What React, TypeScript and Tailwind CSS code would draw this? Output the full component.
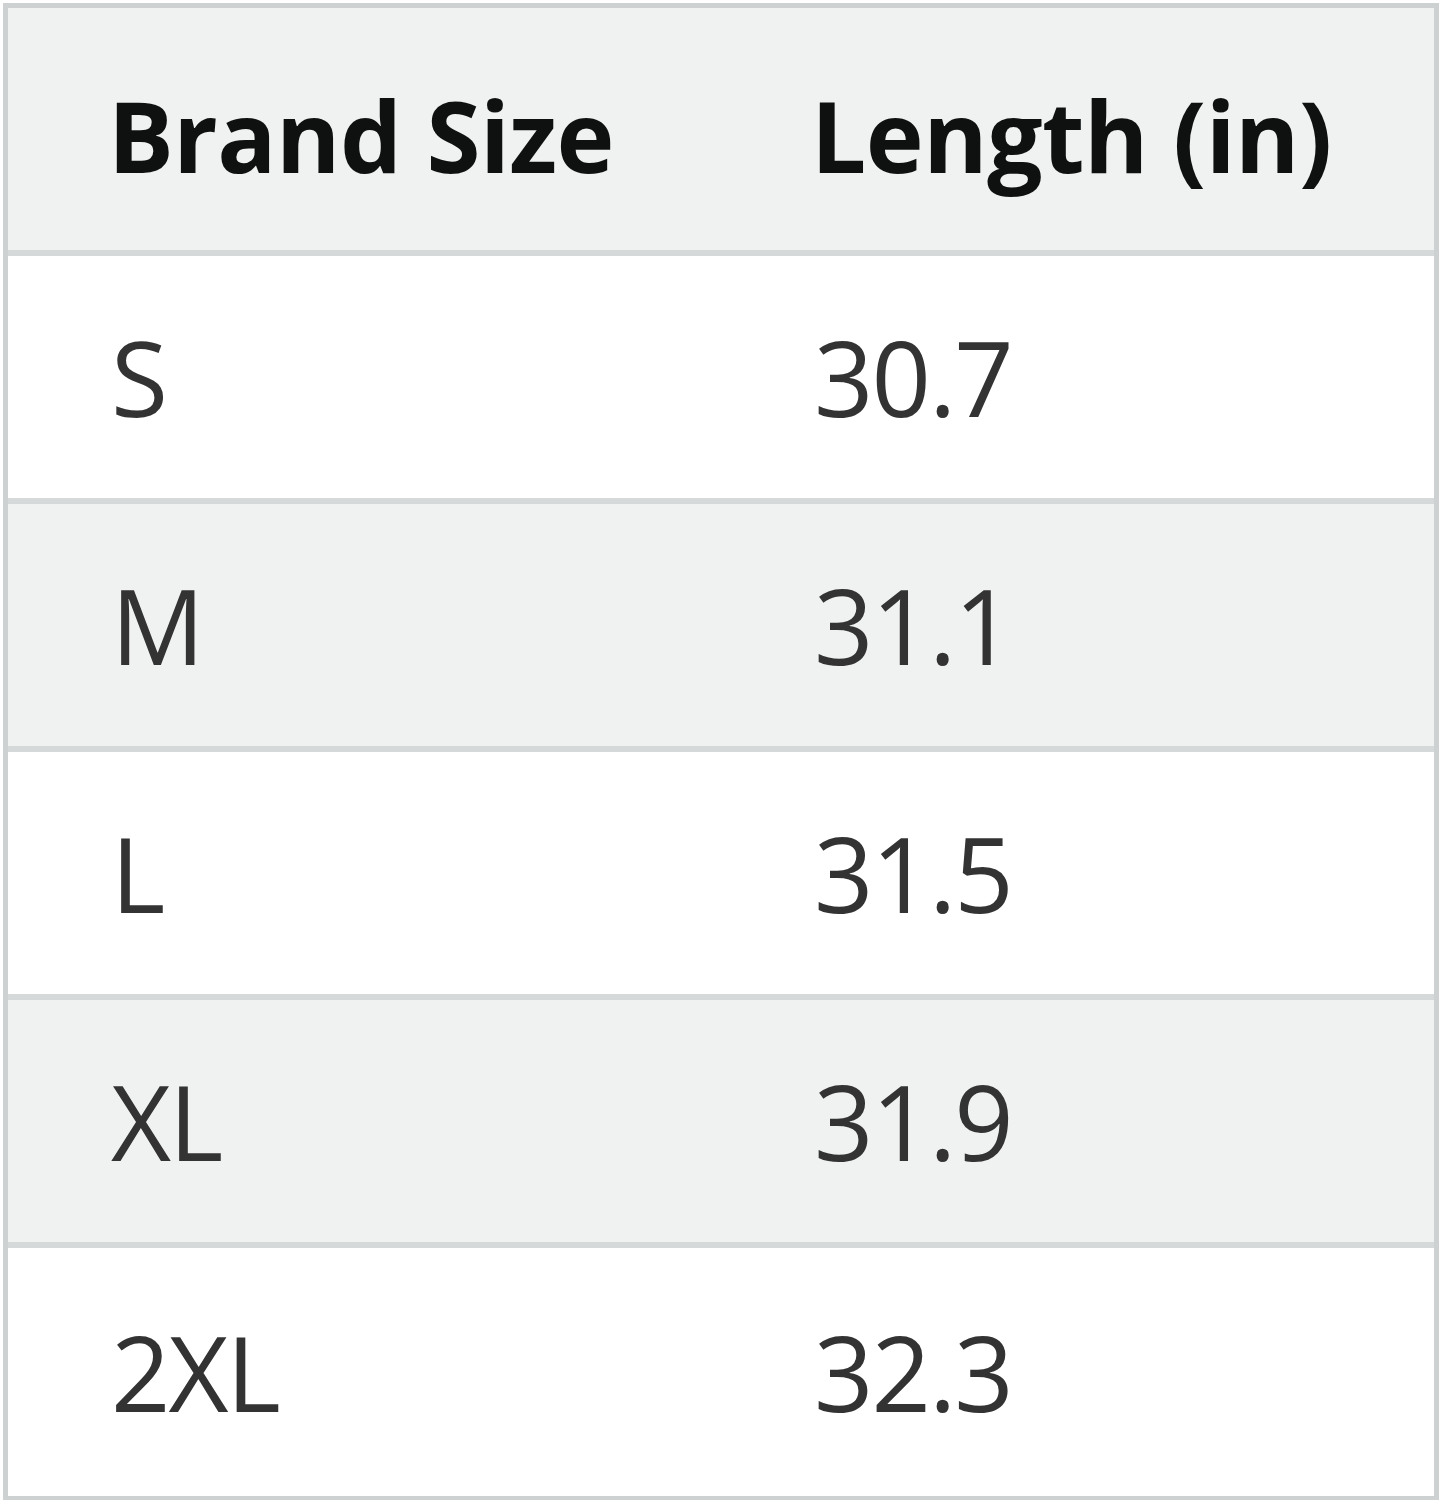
const ROWS = [
  { size: 'S', length: '30.7' },
  { size: 'M', length: '31.1' },
  { size: 'L', length: '31.5' },
  { size: 'XL', length: '31.9' },
  { size: '2XL', length: '32.3' },
];

export default function App() {
  return (
    <div className="min-h-[1500px] bg-white pl-[3px] pt-[3px]" style={{ fontFamily: '"Open Sans", "Noto Sans", sans-serif' }}>
      <div className="w-[1436px] border-[5px] border-[#cdd1d1]">
        {/* Header */}
        <div className="grid h-[248px] grid-cols-[703px_1fr] items-center border-b-[6px] border-[#d5d9d9] bg-[#f0f2f2] pt-[11px] text-[98px] font-bold leading-none tracking-[-0.5px] text-[#0f1111]">
          <div className="pl-[100px]">Brand Size</div>
          <div className="pl-[100px]">Length (in)</div>
        </div>

        {ROWS.map((row, i) => (
          <div
            key={row.size}
            className={`grid h-[248px] grid-cols-[703px_1fr] items-center text-[104px] leading-none tracking-[-2px] text-[#333333] ${
              i % 2 === 1 ? 'bg-[#f0f2f2]' : 'bg-white'
            } ${i < ROWS.length - 1 ? 'border-b-[6px] border-[#d5d9d9]' : ''}`}
          >
            <div className="pl-[103px]">{row.size}</div>
            <div className="pl-[103px]">{row.length}</div>
          </div>
        ))}
      </div>
    </div>
  );
}
